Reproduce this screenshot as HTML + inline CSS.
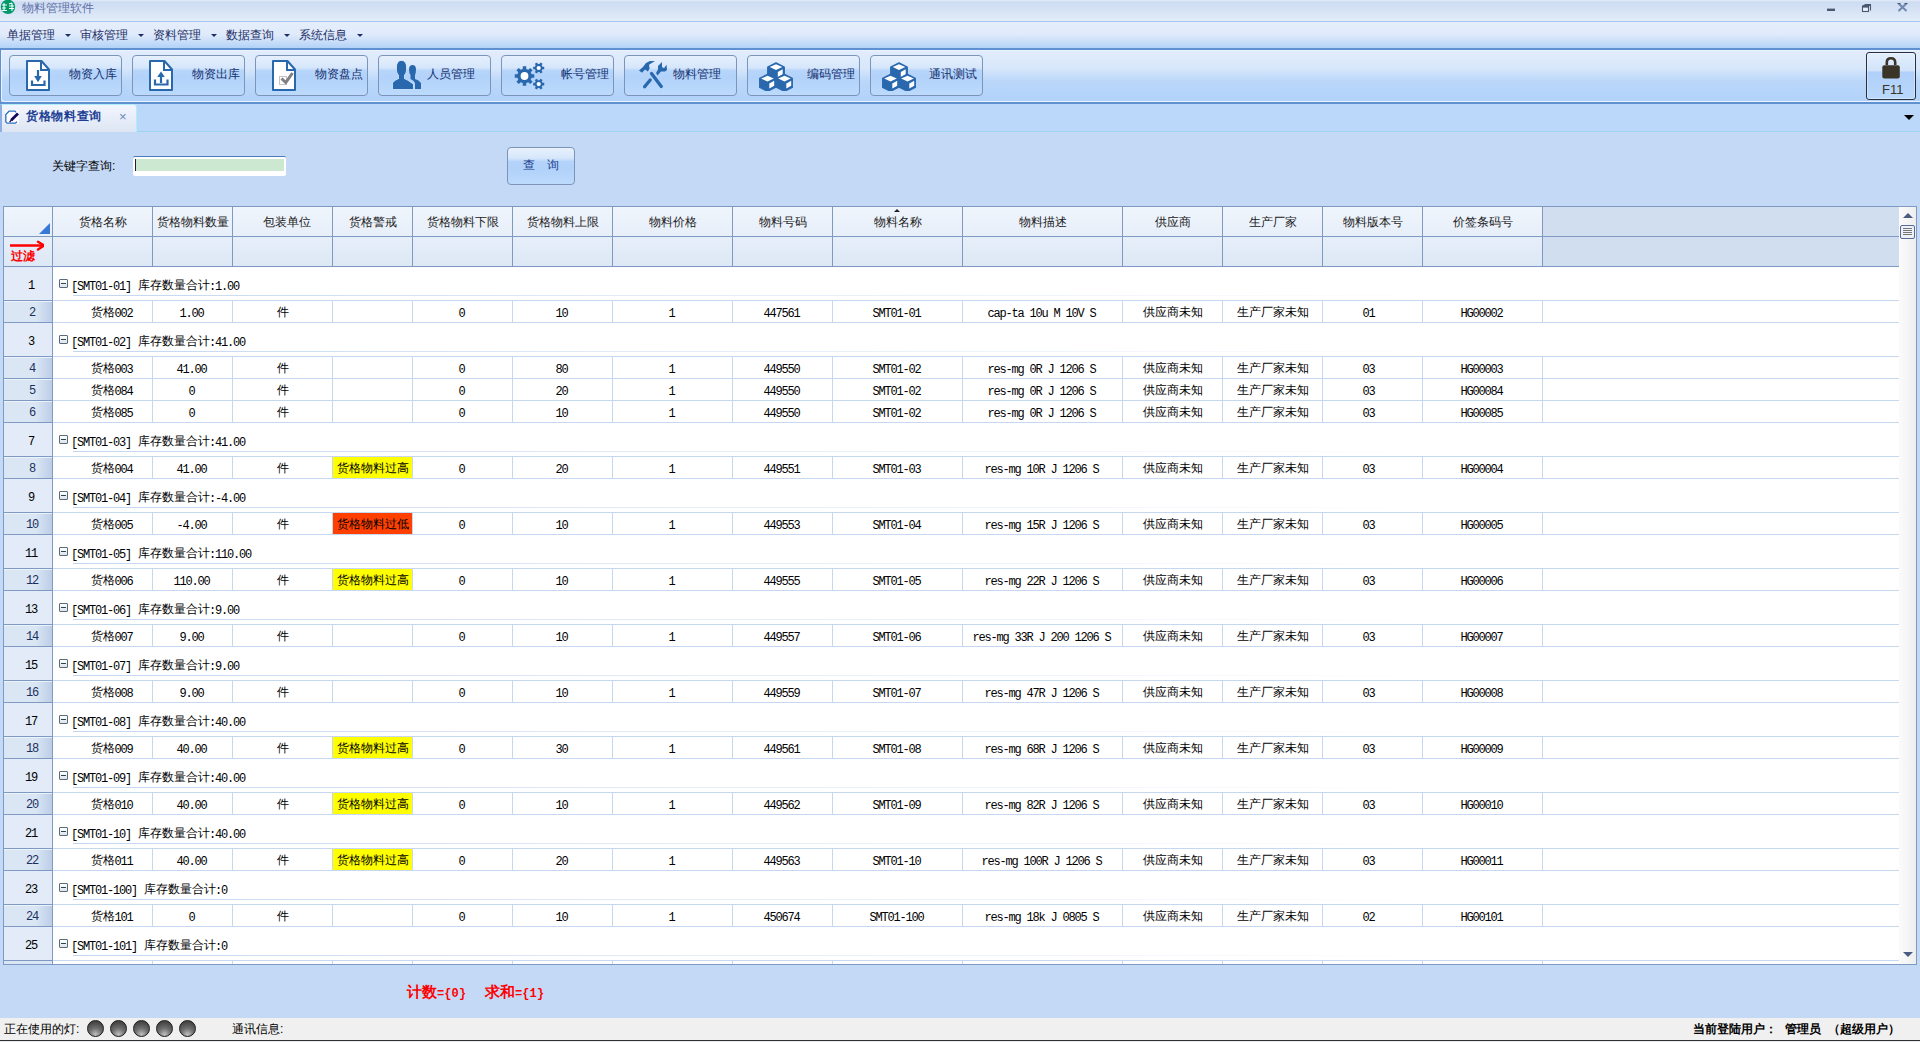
<!DOCTYPE html><html><head><meta charset="utf-8"><style>
*{margin:0;padding:0;box-sizing:border-box}
html,body{width:1920px;height:1042px;overflow:hidden;background:#c4d9f5;font-family:"Liberation Sans",sans-serif;font-size:12px;color:#000}
.a{position:absolute}
.m{font-family:"Liberation Mono",monospace;font-size:12px;letter-spacing:-1.2px;position:relative;left:-1px;top:1px}
.c{font-size:12px}
#title{left:0;top:0;width:1920px;height:22px;background:linear-gradient(#e4edf9 0px,#cedcf2 2px,#d4e1f4 8px,#e2ecf9 21px);border-bottom:1px solid #a6c8f0}
#menu{left:0;top:22px;width:1920px;height:28px;background:linear-gradient(#e5eefb 0%,#dfeafb 50%,#c6ddf9 78%,#b2d2f8 100%);border-bottom:2px solid #5f90d0}
.mi{top:29px;height:12px;line-height:12px;color:#1e2f66}
.arr{width:0;height:0;border-left:3px solid transparent;border-right:3px solid transparent;border-top:3px solid #1e2f66}
#tool{left:0;top:50px;width:1920px;height:54px;background:linear-gradient(#e2edfc 0%,#d8e7fb 35%,#bad7fa 60%,#b2d2fa 100%);border-bottom:2px solid #5f90d0;border-left:1px solid #5f90d0}
#toolhi{left:1px;top:50px;width:1919px;height:52px;border:1px solid #eaf3fd;border-right:none;border-radius:4px 0 0 4px}
.tb{top:55px;width:113px;height:41px;border:1px solid #7b94b8;border-radius:4px;background:linear-gradient(#e6f0fd 0%,#d6e6fb 30%,#b8d6fa 37%,#b2d2fa 55%,#bcdafc 100%)}
.tt{color:#15306e;height:12px;line-height:12px;top:68px}
#tabs{left:0;top:104px;width:1920px;height:28px;background:#bbd8fb;border-bottom:1px solid #9fd4f2}
#tab{left:0;top:104px;width:137px;height:28px;background:linear-gradient(#f2f5fd,#dde6f4);border:1px solid #b0eefc;border-left:2px solid #8eaee0;border-bottom:none;border-radius:0 3px 0 0}
#grid{left:3px;top:206px;width:1914px;height:759px;border:1px solid #7f9ac2;background:#fff;overflow:hidden}
.hd{background:linear-gradient(#f0f5fc,#dde8f6)}
.hl{background:#7f9ac2}
.cl{background:#c5d8f0}
</style></head><body>

<div id="title" class="a"></div>
<svg class="a" style="left:0;top:0" width="16" height="15" viewBox="0 0 16 15"><circle cx="8" cy="6.8" r="7.2" fill="#009a6a"/><path d="M2,5 H7 M4,3 V11 M2,8 H6 M2,10.5 H7 M9,4 L12,3 M9,6 H14 M12,3 V11 M9,8.5 H14" stroke="#fff" stroke-width="1.1" fill="none"/></svg>
<div class="a" style="left:22px;top:2px;height:12px;line-height:12px;color:#6070a8;font-size:12px">物料管理软件</div>
<svg class="a" style="left:1820px;top:0" width="100" height="16" viewBox="0 0 100 16"><rect x="7" y="8.6" width="8" height="2.4" fill="#4a5870"/><path d="M42.5,5.5 H50.5 V10.5 M44.5,4.6 H51" fill="none" stroke="#4a5870" stroke-width="1.1"/><rect x="42.5" y="6.5" width="6" height="5" fill="#e8eefa" stroke="#4a5870" stroke-width="1.1"/><rect x="42.5" y="6.3" width="6" height="1.3" fill="#4a5870"/><path d="M78.5,3.5 L86.5,11 M86.5,3.5 L78.5,11" stroke="#7088b0" stroke-width="2"/><path d="M77.5,3.5 H80.5 M84.5,3.5 H87.5" stroke="#505a68" stroke-width="1.2"/></svg>
<div id="menu" class="a"></div>
<div class="a mi" style="left:7px">单据管理</div>
<div class="a arr" style="left:65px;top:34px"></div>
<div class="a mi" style="left:80px">审核管理</div>
<div class="a arr" style="left:138px;top:34px"></div>
<div class="a mi" style="left:153px">资料管理</div>
<div class="a arr" style="left:211px;top:34px"></div>
<div class="a mi" style="left:226px">数据查询</div>
<div class="a arr" style="left:284px;top:34px"></div>
<div class="a mi" style="left:299px">系统信息</div>
<div class="a arr" style="left:357px;top:34px"></div>
<div id="tool" class="a"></div><div id="toolhi" class="a"></div>
<div class="a tb" style="left:9px"></div>
<div class="a tt" style="left:69px">物资入库</div>
<div class="a tb" style="left:132px"></div>
<div class="a tt" style="left:192px">物资出库</div>
<div class="a tb" style="left:255px"></div>
<div class="a tt" style="left:315px">物资盘点</div>
<div class="a tb" style="left:378px"></div>
<div class="a tt" style="left:427px">人员管理</div>
<div class="a tb" style="left:501px"></div>
<div class="a tt" style="left:561px">帐号管理</div>
<div class="a tb" style="left:624px"></div>
<div class="a tt" style="left:673px">物料管理</div>
<div class="a tb" style="left:747px"></div>
<div class="a tt" style="left:807px">编码管理</div>
<div class="a tb" style="left:870px"></div>
<div class="a tt" style="left:929px">通讯测试</div>
<svg class="a" style="left:26px;top:60px" width="24" height="31" viewBox="0 0 24 31"><path d="M1,1 H15.5 L23,9.5 V30 H1 Z" fill="#fff" stroke="#2a68ae" stroke-width="2" stroke-linejoin="round"/><path d="M15,1 V10 H23" fill="none" stroke="#2a68ae" stroke-width="2"/><path d="M12,10 V19" stroke="#2a68ae" stroke-width="2.2"/><path d="M8.2,16 L12,22.2 L15.8,16 Z" fill="#2a68ae"/><path d="M6,20.5 V25 H18.5 V20.5" fill="none" stroke="#2a68ae" stroke-width="2.2"/></svg>
<svg class="a" style="left:149px;top:60px" width="24" height="31" viewBox="0 0 24 31"><path d="M1,1 H15.5 L23,9.5 V30 H1 Z" fill="#fff" stroke="#2a68ae" stroke-width="2" stroke-linejoin="round"/><path d="M15,1 V10 H23" fill="none" stroke="#2a68ae" stroke-width="2"/><path d="M12,14 V23" stroke="#2a68ae" stroke-width="2.2"/><path d="M8.2,17 L12,11.5 L15.8,17 Z" fill="#2a68ae"/><path d="M6,19.5 V24.5 H18.5 V19.5" fill="none" stroke="#2a68ae" stroke-width="2.2"/></svg>
<svg class="a" style="left:272px;top:60px" width="24" height="31" viewBox="0 0 24 31"><path d="M1,1 H15.5 L23,9.5 V30 H1 Z" fill="#fff" stroke="#2a68ae" stroke-width="2" stroke-linejoin="round"/><path d="M15,1 V10 H23" fill="none" stroke="#2a68ae" stroke-width="2"/><rect x="7.5" y="16.5" width="7" height="8" fill="none" stroke="#c4c4c4" stroke-width="1"/><path d="M9.5,18.5 L13.8,22.5 L20.5,13" fill="none" stroke="#808080" stroke-width="3"/></svg>
<svg class="a" style="left:388px;top:56px" width="38" height="38" viewBox="0 0 38 38"><path d="M27,33 V27 Q26,24.5 22.5,23 V19 Q21,17 21,13.5 Q21,9 24.5,9 Q28,9 28,13.5 Q28,17 27,19 V23 Q31,24 33,27 V33 Z" fill="#2a68ae"/><path d="M5,33 V27 Q7,24.5 11,23 V19 Q9,17 9,12 Q9,5 13.5,5 Q18,5 18,12 Q18,17 16,19 V23 Q21,25 25,28.5 V33 Z" fill="#2a68ae" stroke="#c6ddf9" stroke-width="1.3" paint-order="stroke"/><path d="M5,33 V27 Q7,24.5 11,23 V19 Q9,17 9,12 Q9,5 13.5,5 Q18,5 18,12 Q18,17 16,19 V23 Q21,25 25,28.5 V33 Z" fill="#2a68ae"/></svg>
<svg class="a" style="left:510px;top:58px" width="38" height="36" viewBox="0 0 38 36"><path d="M21.58,16.24 L24.25,16.26 L24.25,19.74 L21.58,19.76 L20.75,21.77 L22.62,23.66 L20.16,26.12 L18.27,24.25 L16.26,25.08 L16.24,27.75 L12.76,27.75 L12.74,25.08 L10.73,24.25 L8.84,26.12 L6.38,23.66 L8.25,21.77 L7.42,19.76 L4.75,19.74 L4.75,16.26 L7.42,16.24 L8.25,14.23 L6.38,12.34 L8.84,9.88 L10.73,11.75 L12.74,10.92 L12.76,8.25 L16.24,8.25 L16.26,10.92 L18.27,11.75 L20.16,9.88 L22.62,12.34 L20.75,14.23 Z" fill="#2a68ae"/><circle cx="14.5" cy="18" r="3.9" fill="#fff"/><path d="M32.49,8.72 L34.24,8.67 L34.24,11.33 L32.49,11.28 L31.70,12.65 L32.62,14.13 L30.32,15.47 L29.49,13.92 L27.91,13.92 L27.08,15.47 L24.78,14.13 L25.70,12.65 L24.91,11.28 L23.16,11.33 L23.16,8.67 L24.91,8.72 L25.70,7.35 L24.78,5.87 L27.08,4.53 L27.91,6.08 L29.49,6.08 L30.32,4.53 L32.62,5.87 L31.70,7.35 Z" fill="#2a68ae"/><circle cx="28.7" cy="10" r="2.1" fill="#fff"/><path d="M32.49,24.82 L34.24,24.77 L34.24,27.43 L32.49,27.38 L31.70,28.75 L32.62,30.23 L30.32,31.57 L29.49,30.02 L27.91,30.02 L27.08,31.57 L24.78,30.23 L25.70,28.75 L24.91,27.38 L23.16,27.43 L23.16,24.77 L24.91,24.82 L25.70,23.45 L24.78,21.97 L27.08,20.63 L27.91,22.18 L29.49,22.18 L30.32,20.63 L32.62,21.97 L31.70,23.45 Z" fill="#2a68ae"/><circle cx="28.7" cy="26.1" r="2.1" fill="#fff"/></svg>
<svg class="a" style="left:634px;top:56px" width="38" height="38" viewBox="0 0 38 38"><path d="M5,14.5 L9,11 L12,7 L16,5 L21,5 L15,8.7 L15.6,12.4 L13.9,15.6 L11,13.6 L8,16.8 Z" fill="#2a68ae"/><path d="M17.5,17.5 L27.3,30.5" stroke="#2a68ae" stroke-width="3.3" stroke-linecap="round"/><path d="M16.2,24 L10.6,30.8" stroke="#2a68ae" stroke-width="3.3" stroke-linecap="round"/><path d="M24,10 L28,6 L28,11 L30,12.2 L32.5,8.7 L33,14 L31,15.6 L27,15.6 L23.5,19.6 L22,17 L24,13.5 Z" fill="#2a68ae"/></svg>
<svg class="a" style="left:759px;top:62px" width="34" height="29" viewBox="0 0 34 29"><path d="M17.0,0.8 L25.3,5.1 L25.3,13.6 L17.0,17.9 L8.7,13.6 L8.7,5.1 Z" fill="#2a68ae" stroke="#2a68ae" stroke-width="1.2" stroke-linejoin="round"/><path d="M17.0,2.2 L23.3,5.1 L17.0,8.0 L10.7,5.1 Z" fill="#fff"/><path d="M18.8,10.0 L23.7,7.3 L23.7,12.2 L18.8,14.9 Z" fill="#fff"/><path d="M8.5,12.3 L16.8,16.6 L16.8,25.1 L8.5,29.4 L0.2,25.1 L0.2,16.6 Z" fill="#2a68ae" stroke="#2a68ae" stroke-width="1.2" stroke-linejoin="round"/><path d="M8.5,13.7 L14.8,16.6 L8.5,19.5 L2.2,16.6 Z" fill="#fff"/><path d="M10.3,21.5 L15.2,18.8 L15.2,23.7 L10.3,26.4 Z" fill="#fff"/><path d="M25.5,12.3 L33.8,16.6 L33.8,25.1 L25.5,29.4 L17.2,25.1 L17.2,16.6 Z" fill="#2a68ae" stroke="#2a68ae" stroke-width="1.2" stroke-linejoin="round"/><path d="M25.5,13.7 L31.8,16.6 L25.5,19.5 L19.2,16.6 Z" fill="#fff"/><path d="M27.3,21.5 L32.2,18.8 L32.2,23.7 L27.3,26.4 Z" fill="#fff"/></svg>
<svg class="a" style="left:882px;top:62px" width="34" height="29" viewBox="0 0 34 29"><path d="M17.0,0.8 L25.3,5.1 L25.3,13.6 L17.0,17.9 L8.7,13.6 L8.7,5.1 Z" fill="#2a68ae" stroke="#2a68ae" stroke-width="1.2" stroke-linejoin="round"/><path d="M17.0,2.2 L23.3,5.1 L17.0,8.0 L10.7,5.1 Z" fill="#fff"/><path d="M18.8,10.0 L23.7,7.3 L23.7,12.2 L18.8,14.9 Z" fill="#fff"/><path d="M8.5,12.3 L16.8,16.6 L16.8,25.1 L8.5,29.4 L0.2,25.1 L0.2,16.6 Z" fill="#2a68ae" stroke="#2a68ae" stroke-width="1.2" stroke-linejoin="round"/><path d="M8.5,13.7 L14.8,16.6 L8.5,19.5 L2.2,16.6 Z" fill="#fff"/><path d="M10.3,21.5 L15.2,18.8 L15.2,23.7 L10.3,26.4 Z" fill="#fff"/><path d="M25.5,12.3 L33.8,16.6 L33.8,25.1 L25.5,29.4 L17.2,25.1 L17.2,16.6 Z" fill="#2a68ae" stroke="#2a68ae" stroke-width="1.2" stroke-linejoin="round"/><path d="M25.5,13.7 L31.8,16.6 L25.5,19.5 L19.2,16.6 Z" fill="#fff"/><path d="M27.3,21.5 L32.2,18.8 L32.2,23.7 L27.3,26.4 Z" fill="#fff"/></svg>
<div class="a" style="left:1866px;top:52px;width:50px;height:48px;border:1px solid #283040;border-radius:3px;background:linear-gradient(#e2eefc 0%,#d2e4fb 38%,#b0d0fa 42%,#bad8fc 100%);box-shadow:inset 0 0 0 1px rgba(255,255,255,0.35)"></div>
<svg class="a" style="left:1880px;top:56px" width="22" height="24" viewBox="0 0 22 24"><path d="M6.8,9 V6.5 Q6.8,2.2 11,2.2 Q15.2,2.2 15.2,6.5 V9" fill="none" stroke="#3a3428" stroke-width="2.6"/><rect x="2.3" y="9.2" width="17.5" height="13.4" rx="2" fill="#3a3428"/></svg>
<div class="a" style="left:1882px;top:83px;font-size:13px;line-height:13px;color:#3a3428">F11</div>
<div id="tabs" class="a"></div>
<div id="tab" class="a"></div>
<svg class="a" style="left:5px;top:110px" width="14" height="14" viewBox="0 0 14 14"><rect width="14" height="14" fill="#fff"/><path d="M11.5,11.5 V12.2 L10.5,13.2 H2 L0.8,12 V4.5 L4,1.2 H10 L11,2.2" stroke="#2a70c0" stroke-width="1.3" fill="none"/><path d="M6.2,10.2 L13,3.4" stroke="#100a60" stroke-width="2.8"/><path d="M4.6,12 L6.5,10" stroke="#100a60" stroke-width="1.3"/></svg>
<div class="a" style="left:26px;top:110px;font-weight:bold;color:#1c3f94;letter-spacing:0.7px;line-height:12px">货格物料查询</div>
<div class="a" style="left:119px;top:110px;color:#6a88b8;font-size:13px;line-height:13px">×</div>
<div class="a" style="left:1904px;top:115px;width:0;height:0;border-left:5px solid transparent;border-right:5px solid transparent;border-top:5px solid #000"></div>
<div class="a" style="left:52px;top:160px;line-height:12px">关键字查询:</div>
<div class="a" style="left:133px;top:156px;width:153px;height:20px;background:#fff;border-top:1px solid #4a7ab8;border-radius:2px"></div>
<div class="a" style="left:135px;top:159px;width:149px;height:12px;background:#cce8d0"></div>
<div class="a" style="left:135px;top:159px;width:1px;height:12px;background:#301830"></div>
<div class="a" style="left:507px;top:147px;width:68px;height:38px;border:1px solid #7b94b8;border-radius:4px;background:linear-gradient(#e8f1fd 0%,#d6e7fb 28%,#b4d3fa 38%,#b2d2fa 60%,#bddafc 100%)"></div>
<div class="a" style="left:523px;top:159px;color:#1a3f8e;line-height:12px">查</div>
<div class="a" style="left:547px;top:159px;color:#1a3f8e;line-height:12px">询</div>
<div id="grid" class="a">
<div class="a hd" style="left:0px;top:0px;width:1895px;height:59px;"></div>
<div class="a " style="left:1539px;top:0px;width:356px;height:59px;background:#d0deef"></div>
<div class="a hl" style="left:0px;top:29px;width:1895px;height:1px;"></div>
<div class="a hl" style="left:0px;top:59px;width:1895px;height:1px;"></div>
<div class="a hl" style="left:48px;top:0px;width:1px;height:59px;"></div>
<div class="a hl" style="left:148px;top:0px;width:1px;height:59px;"></div>
<div class="a hl" style="left:228px;top:0px;width:1px;height:59px;"></div>
<div class="a hl" style="left:328px;top:0px;width:1px;height:59px;"></div>
<div class="a hl" style="left:408px;top:0px;width:1px;height:59px;"></div>
<div class="a hl" style="left:508px;top:0px;width:1px;height:59px;"></div>
<div class="a hl" style="left:608px;top:0px;width:1px;height:59px;"></div>
<div class="a hl" style="left:728px;top:0px;width:1px;height:59px;"></div>
<div class="a hl" style="left:828px;top:0px;width:1px;height:59px;"></div>
<div class="a hl" style="left:958px;top:0px;width:1px;height:59px;"></div>
<div class="a hl" style="left:1118px;top:0px;width:1px;height:59px;"></div>
<div class="a hl" style="left:1218px;top:0px;width:1px;height:59px;"></div>
<div class="a hl" style="left:1318px;top:0px;width:1px;height:59px;"></div>
<div class="a hl" style="left:1418px;top:0px;width:1px;height:59px;"></div>
<div class="a hl" style="left:1538px;top:0px;width:1px;height:59px;"></div>
<div class="a" style="left:49px;top:9px;width:99px;text-align:center;line-height:12px;color:#1a1a1a">货格名称</div>
<div class="a" style="left:149px;top:9px;width:79px;text-align:center;line-height:12px;color:#1a1a1a">货格物料数量</div>
<div class="a" style="left:233px;top:9px;width:99px;text-align:center;line-height:12px;color:#1a1a1a">包装单位</div>
<div class="a" style="left:329px;top:9px;width:79px;text-align:center;line-height:12px;color:#1a1a1a">货格警戒</div>
<div class="a" style="left:409px;top:9px;width:99px;text-align:center;line-height:12px;color:#1a1a1a">货格物料下限</div>
<div class="a" style="left:509px;top:9px;width:99px;text-align:center;line-height:12px;color:#1a1a1a">货格物料上限</div>
<div class="a" style="left:609px;top:9px;width:119px;text-align:center;line-height:12px;color:#1a1a1a">物料价格</div>
<div class="a" style="left:729px;top:9px;width:99px;text-align:center;line-height:12px;color:#1a1a1a">物料号码</div>
<div class="a" style="left:829px;top:9px;width:129px;text-align:center;line-height:12px;color:#1a1a1a">物料名称</div>
<div class="a" style="left:959px;top:9px;width:159px;text-align:center;line-height:12px;color:#1a1a1a">物料描述</div>
<div class="a" style="left:1119px;top:9px;width:99px;text-align:center;line-height:12px;color:#1a1a1a">供应商</div>
<div class="a" style="left:1219px;top:9px;width:99px;text-align:center;line-height:12px;color:#1a1a1a">生产厂家</div>
<div class="a" style="left:1319px;top:9px;width:99px;text-align:center;line-height:12px;color:#1a1a1a">物料版本号</div>
<div class="a" style="left:1419px;top:9px;width:119px;text-align:center;line-height:12px;color:#1a1a1a">价签条码号</div>
<div class="a" style="left:890px;top:2px;width:0;height:0;border-left:3px solid transparent;border-right:3px solid transparent;border-bottom:3px solid #202020"></div>
<div class="a" style="left:35px;top:16px;width:0;height:0;border-left:11px solid transparent;border-bottom:11px solid #3a78d8"></div>
<div class="a" style="left:7px;top:43px;line-height:12px;white-space:nowrap;color:#f00;font-weight:bold;font-size:12px">过滤</div>
<svg class="a" style="left:0px;top:33px" width="40" height="12" viewBox="0 0 40 12"><path d="M6,5.5 H40.3" stroke="#f00" stroke-width="2.4"/><path d="M34,1.8 L40.3,5.5 L34,9.5" fill="none" stroke="#f00" stroke-width="2.4" stroke-linejoin="round" stroke-linecap="round"/></svg>
<div class="a " style="left:0px;top:60px;width:48px;height:33px;background:#e2ebf7"></div>
<div class="a hl" style="left:0px;top:93px;width:48px;height:1px;"></div>
<div class="a hl" style="left:48px;top:60px;width:1px;height:34px;"></div>
<div class="a" style="left:4px;top:72px;line-height:12px;white-space:nowrap;"><div class="m" style="width:48px;text-align:center">1</div></div>
<div class="a " style="left:55px;top:72px;width:9px;height:9px;border:1px solid #5a6a7a;background:linear-gradient(#fff,#dde4ea);border-radius:1px"></div>
<div class="a " style="left:57px;top:76px;width:5px;height:1px;background:#2a4a4a"></div>
<div class="a" style="left:68px;top:72px;line-height:12px;white-space:nowrap;"><span class="m">[SMT01-01]&nbsp;</span><span class="c">库存数量合计</span><span class="m">:1.00</span></div>
<div class="a " style="left:69px;top:88px;width:1380px;height:1px;background:linear-gradient(90deg,#c2d6f2,rgba(194,214,242,0.55) 35%,rgba(194,214,242,0))"></div>
<div class="a cl" style="left:49px;top:93px;width:1846px;height:1px;"></div>
<div class="a " style="left:0px;top:94px;width:48px;height:21px;background:linear-gradient(90deg,#dae6f4 0%,#dae6f4 66%,#bccde6 100%);border-top:1px solid #edf3fb"></div>
<div class="a hl" style="left:0px;top:115px;width:48px;height:1px;"></div>
<div class="a hl" style="left:48px;top:94px;width:1px;height:22px;"></div>
<div class="a" style="left:5px;top:99px;line-height:12px;white-space:nowrap;"><div class="m" style="width:48px;text-align:center;color:#1a3060">2</div></div>
<div class="a cl" style="left:148px;top:94px;width:1px;height:21px;"></div>
<div class="a" style="left:69px;top:99px;width:79px;text-align:center;line-height:12px;white-space:nowrap"><span class="c">货格</span><span class="m">002</span></div>
<div class="a cl" style="left:228px;top:94px;width:1px;height:21px;"></div>
<div class="a" style="left:149px;top:99px;width:79px;text-align:center;line-height:12px;white-space:nowrap"><span class="m">1.00</span></div>
<div class="a cl" style="left:328px;top:94px;width:1px;height:21px;"></div>
<div class="a" style="left:229px;top:99px;width:99px;text-align:center;line-height:12px;white-space:nowrap"><span class="c">件</span></div>
<div class="a cl" style="left:408px;top:94px;width:1px;height:21px;"></div>
<div class="a" style="left:329px;top:99px;width:79px;text-align:center;line-height:12px;white-space:nowrap"></div>
<div class="a cl" style="left:508px;top:94px;width:1px;height:21px;"></div>
<div class="a" style="left:409px;top:99px;width:99px;text-align:center;line-height:12px;white-space:nowrap"><span class="m">0</span></div>
<div class="a cl" style="left:608px;top:94px;width:1px;height:21px;"></div>
<div class="a" style="left:509px;top:99px;width:99px;text-align:center;line-height:12px;white-space:nowrap"><span class="m">10</span></div>
<div class="a cl" style="left:728px;top:94px;width:1px;height:21px;"></div>
<div class="a" style="left:609px;top:99px;width:119px;text-align:center;line-height:12px;white-space:nowrap"><span class="m">1</span></div>
<div class="a cl" style="left:828px;top:94px;width:1px;height:21px;"></div>
<div class="a" style="left:729px;top:99px;width:99px;text-align:center;line-height:12px;white-space:nowrap"><span class="m">447561</span></div>
<div class="a cl" style="left:958px;top:94px;width:1px;height:21px;"></div>
<div class="a" style="left:829px;top:99px;width:129px;text-align:center;line-height:12px;white-space:nowrap"><span class="m">SMT01-01</span></div>
<div class="a cl" style="left:1118px;top:94px;width:1px;height:21px;"></div>
<div class="a" style="left:959px;top:99px;width:159px;text-align:center;line-height:12px;white-space:nowrap"><span class="m">cap-ta&nbsp;10u&nbsp;M&nbsp;10V&nbsp;S</span></div>
<div class="a cl" style="left:1218px;top:94px;width:1px;height:21px;"></div>
<div class="a" style="left:1119px;top:99px;width:99px;text-align:center;line-height:12px;white-space:nowrap"><span class="c">供应商未知</span></div>
<div class="a cl" style="left:1318px;top:94px;width:1px;height:21px;"></div>
<div class="a" style="left:1219px;top:99px;width:99px;text-align:center;line-height:12px;white-space:nowrap"><span class="c">生产厂家未知</span></div>
<div class="a cl" style="left:1418px;top:94px;width:1px;height:21px;"></div>
<div class="a" style="left:1316px;top:99px;width:99px;text-align:center;line-height:12px;white-space:nowrap"><span class="m">01</span></div>
<div class="a cl" style="left:1538px;top:94px;width:1px;height:21px;"></div>
<div class="a" style="left:1419px;top:99px;width:119px;text-align:center;line-height:12px;white-space:nowrap"><span class="m">HG00002</span></div>
<div class="a cl" style="left:49px;top:115px;width:1846px;height:1px;"></div>
<div class="a " style="left:0px;top:116px;width:48px;height:33px;background:#e2ebf7"></div>
<div class="a hl" style="left:0px;top:149px;width:48px;height:1px;"></div>
<div class="a hl" style="left:48px;top:116px;width:1px;height:34px;"></div>
<div class="a" style="left:4px;top:128px;line-height:12px;white-space:nowrap;"><div class="m" style="width:48px;text-align:center">3</div></div>
<div class="a " style="left:55px;top:128px;width:9px;height:9px;border:1px solid #5a6a7a;background:linear-gradient(#fff,#dde4ea);border-radius:1px"></div>
<div class="a " style="left:57px;top:132px;width:5px;height:1px;background:#2a4a4a"></div>
<div class="a" style="left:68px;top:128px;line-height:12px;white-space:nowrap;"><span class="m">[SMT01-02]&nbsp;</span><span class="c">库存数量合计</span><span class="m">:41.00</span></div>
<div class="a " style="left:69px;top:144px;width:1380px;height:1px;background:linear-gradient(90deg,#c2d6f2,rgba(194,214,242,0.55) 35%,rgba(194,214,242,0))"></div>
<div class="a cl" style="left:49px;top:149px;width:1846px;height:1px;"></div>
<div class="a " style="left:0px;top:150px;width:48px;height:21px;background:linear-gradient(90deg,#dae6f4 0%,#dae6f4 66%,#bccde6 100%);border-top:1px solid #edf3fb"></div>
<div class="a hl" style="left:0px;top:171px;width:48px;height:1px;"></div>
<div class="a hl" style="left:48px;top:150px;width:1px;height:22px;"></div>
<div class="a" style="left:5px;top:155px;line-height:12px;white-space:nowrap;"><div class="m" style="width:48px;text-align:center;color:#1a3060">4</div></div>
<div class="a cl" style="left:148px;top:150px;width:1px;height:21px;"></div>
<div class="a" style="left:69px;top:155px;width:79px;text-align:center;line-height:12px;white-space:nowrap"><span class="c">货格</span><span class="m">003</span></div>
<div class="a cl" style="left:228px;top:150px;width:1px;height:21px;"></div>
<div class="a" style="left:149px;top:155px;width:79px;text-align:center;line-height:12px;white-space:nowrap"><span class="m">41.00</span></div>
<div class="a cl" style="left:328px;top:150px;width:1px;height:21px;"></div>
<div class="a" style="left:229px;top:155px;width:99px;text-align:center;line-height:12px;white-space:nowrap"><span class="c">件</span></div>
<div class="a cl" style="left:408px;top:150px;width:1px;height:21px;"></div>
<div class="a" style="left:329px;top:155px;width:79px;text-align:center;line-height:12px;white-space:nowrap"></div>
<div class="a cl" style="left:508px;top:150px;width:1px;height:21px;"></div>
<div class="a" style="left:409px;top:155px;width:99px;text-align:center;line-height:12px;white-space:nowrap"><span class="m">0</span></div>
<div class="a cl" style="left:608px;top:150px;width:1px;height:21px;"></div>
<div class="a" style="left:509px;top:155px;width:99px;text-align:center;line-height:12px;white-space:nowrap"><span class="m">80</span></div>
<div class="a cl" style="left:728px;top:150px;width:1px;height:21px;"></div>
<div class="a" style="left:609px;top:155px;width:119px;text-align:center;line-height:12px;white-space:nowrap"><span class="m">1</span></div>
<div class="a cl" style="left:828px;top:150px;width:1px;height:21px;"></div>
<div class="a" style="left:729px;top:155px;width:99px;text-align:center;line-height:12px;white-space:nowrap"><span class="m">449550</span></div>
<div class="a cl" style="left:958px;top:150px;width:1px;height:21px;"></div>
<div class="a" style="left:829px;top:155px;width:129px;text-align:center;line-height:12px;white-space:nowrap"><span class="m">SMT01-02</span></div>
<div class="a cl" style="left:1118px;top:150px;width:1px;height:21px;"></div>
<div class="a" style="left:959px;top:155px;width:159px;text-align:center;line-height:12px;white-space:nowrap"><span class="m">res-mg&nbsp;0R&nbsp;J&nbsp;1206&nbsp;S</span></div>
<div class="a cl" style="left:1218px;top:150px;width:1px;height:21px;"></div>
<div class="a" style="left:1119px;top:155px;width:99px;text-align:center;line-height:12px;white-space:nowrap"><span class="c">供应商未知</span></div>
<div class="a cl" style="left:1318px;top:150px;width:1px;height:21px;"></div>
<div class="a" style="left:1219px;top:155px;width:99px;text-align:center;line-height:12px;white-space:nowrap"><span class="c">生产厂家未知</span></div>
<div class="a cl" style="left:1418px;top:150px;width:1px;height:21px;"></div>
<div class="a" style="left:1316px;top:155px;width:99px;text-align:center;line-height:12px;white-space:nowrap"><span class="m">03</span></div>
<div class="a cl" style="left:1538px;top:150px;width:1px;height:21px;"></div>
<div class="a" style="left:1419px;top:155px;width:119px;text-align:center;line-height:12px;white-space:nowrap"><span class="m">HG00003</span></div>
<div class="a cl" style="left:49px;top:171px;width:1846px;height:1px;"></div>
<div class="a " style="left:0px;top:172px;width:48px;height:21px;background:linear-gradient(90deg,#dae6f4 0%,#dae6f4 66%,#bccde6 100%);border-top:1px solid #edf3fb"></div>
<div class="a hl" style="left:0px;top:193px;width:48px;height:1px;"></div>
<div class="a hl" style="left:48px;top:172px;width:1px;height:22px;"></div>
<div class="a" style="left:5px;top:177px;line-height:12px;white-space:nowrap;"><div class="m" style="width:48px;text-align:center;color:#1a3060">5</div></div>
<div class="a cl" style="left:148px;top:172px;width:1px;height:21px;"></div>
<div class="a" style="left:69px;top:177px;width:79px;text-align:center;line-height:12px;white-space:nowrap"><span class="c">货格</span><span class="m">084</span></div>
<div class="a cl" style="left:228px;top:172px;width:1px;height:21px;"></div>
<div class="a" style="left:149px;top:177px;width:79px;text-align:center;line-height:12px;white-space:nowrap"><span class="m">0</span></div>
<div class="a cl" style="left:328px;top:172px;width:1px;height:21px;"></div>
<div class="a" style="left:229px;top:177px;width:99px;text-align:center;line-height:12px;white-space:nowrap"><span class="c">件</span></div>
<div class="a cl" style="left:408px;top:172px;width:1px;height:21px;"></div>
<div class="a" style="left:329px;top:177px;width:79px;text-align:center;line-height:12px;white-space:nowrap"></div>
<div class="a cl" style="left:508px;top:172px;width:1px;height:21px;"></div>
<div class="a" style="left:409px;top:177px;width:99px;text-align:center;line-height:12px;white-space:nowrap"><span class="m">0</span></div>
<div class="a cl" style="left:608px;top:172px;width:1px;height:21px;"></div>
<div class="a" style="left:509px;top:177px;width:99px;text-align:center;line-height:12px;white-space:nowrap"><span class="m">20</span></div>
<div class="a cl" style="left:728px;top:172px;width:1px;height:21px;"></div>
<div class="a" style="left:609px;top:177px;width:119px;text-align:center;line-height:12px;white-space:nowrap"><span class="m">1</span></div>
<div class="a cl" style="left:828px;top:172px;width:1px;height:21px;"></div>
<div class="a" style="left:729px;top:177px;width:99px;text-align:center;line-height:12px;white-space:nowrap"><span class="m">449550</span></div>
<div class="a cl" style="left:958px;top:172px;width:1px;height:21px;"></div>
<div class="a" style="left:829px;top:177px;width:129px;text-align:center;line-height:12px;white-space:nowrap"><span class="m">SMT01-02</span></div>
<div class="a cl" style="left:1118px;top:172px;width:1px;height:21px;"></div>
<div class="a" style="left:959px;top:177px;width:159px;text-align:center;line-height:12px;white-space:nowrap"><span class="m">res-mg&nbsp;0R&nbsp;J&nbsp;1206&nbsp;S</span></div>
<div class="a cl" style="left:1218px;top:172px;width:1px;height:21px;"></div>
<div class="a" style="left:1119px;top:177px;width:99px;text-align:center;line-height:12px;white-space:nowrap"><span class="c">供应商未知</span></div>
<div class="a cl" style="left:1318px;top:172px;width:1px;height:21px;"></div>
<div class="a" style="left:1219px;top:177px;width:99px;text-align:center;line-height:12px;white-space:nowrap"><span class="c">生产厂家未知</span></div>
<div class="a cl" style="left:1418px;top:172px;width:1px;height:21px;"></div>
<div class="a" style="left:1316px;top:177px;width:99px;text-align:center;line-height:12px;white-space:nowrap"><span class="m">03</span></div>
<div class="a cl" style="left:1538px;top:172px;width:1px;height:21px;"></div>
<div class="a" style="left:1419px;top:177px;width:119px;text-align:center;line-height:12px;white-space:nowrap"><span class="m">HG00084</span></div>
<div class="a cl" style="left:49px;top:193px;width:1846px;height:1px;"></div>
<div class="a " style="left:0px;top:194px;width:48px;height:21px;background:linear-gradient(90deg,#dae6f4 0%,#dae6f4 66%,#bccde6 100%);border-top:1px solid #edf3fb"></div>
<div class="a hl" style="left:0px;top:215px;width:48px;height:1px;"></div>
<div class="a hl" style="left:48px;top:194px;width:1px;height:22px;"></div>
<div class="a" style="left:5px;top:199px;line-height:12px;white-space:nowrap;"><div class="m" style="width:48px;text-align:center;color:#1a3060">6</div></div>
<div class="a cl" style="left:148px;top:194px;width:1px;height:21px;"></div>
<div class="a" style="left:69px;top:199px;width:79px;text-align:center;line-height:12px;white-space:nowrap"><span class="c">货格</span><span class="m">085</span></div>
<div class="a cl" style="left:228px;top:194px;width:1px;height:21px;"></div>
<div class="a" style="left:149px;top:199px;width:79px;text-align:center;line-height:12px;white-space:nowrap"><span class="m">0</span></div>
<div class="a cl" style="left:328px;top:194px;width:1px;height:21px;"></div>
<div class="a" style="left:229px;top:199px;width:99px;text-align:center;line-height:12px;white-space:nowrap"><span class="c">件</span></div>
<div class="a cl" style="left:408px;top:194px;width:1px;height:21px;"></div>
<div class="a" style="left:329px;top:199px;width:79px;text-align:center;line-height:12px;white-space:nowrap"></div>
<div class="a cl" style="left:508px;top:194px;width:1px;height:21px;"></div>
<div class="a" style="left:409px;top:199px;width:99px;text-align:center;line-height:12px;white-space:nowrap"><span class="m">0</span></div>
<div class="a cl" style="left:608px;top:194px;width:1px;height:21px;"></div>
<div class="a" style="left:509px;top:199px;width:99px;text-align:center;line-height:12px;white-space:nowrap"><span class="m">10</span></div>
<div class="a cl" style="left:728px;top:194px;width:1px;height:21px;"></div>
<div class="a" style="left:609px;top:199px;width:119px;text-align:center;line-height:12px;white-space:nowrap"><span class="m">1</span></div>
<div class="a cl" style="left:828px;top:194px;width:1px;height:21px;"></div>
<div class="a" style="left:729px;top:199px;width:99px;text-align:center;line-height:12px;white-space:nowrap"><span class="m">449550</span></div>
<div class="a cl" style="left:958px;top:194px;width:1px;height:21px;"></div>
<div class="a" style="left:829px;top:199px;width:129px;text-align:center;line-height:12px;white-space:nowrap"><span class="m">SMT01-02</span></div>
<div class="a cl" style="left:1118px;top:194px;width:1px;height:21px;"></div>
<div class="a" style="left:959px;top:199px;width:159px;text-align:center;line-height:12px;white-space:nowrap"><span class="m">res-mg&nbsp;0R&nbsp;J&nbsp;1206&nbsp;S</span></div>
<div class="a cl" style="left:1218px;top:194px;width:1px;height:21px;"></div>
<div class="a" style="left:1119px;top:199px;width:99px;text-align:center;line-height:12px;white-space:nowrap"><span class="c">供应商未知</span></div>
<div class="a cl" style="left:1318px;top:194px;width:1px;height:21px;"></div>
<div class="a" style="left:1219px;top:199px;width:99px;text-align:center;line-height:12px;white-space:nowrap"><span class="c">生产厂家未知</span></div>
<div class="a cl" style="left:1418px;top:194px;width:1px;height:21px;"></div>
<div class="a" style="left:1316px;top:199px;width:99px;text-align:center;line-height:12px;white-space:nowrap"><span class="m">03</span></div>
<div class="a cl" style="left:1538px;top:194px;width:1px;height:21px;"></div>
<div class="a" style="left:1419px;top:199px;width:119px;text-align:center;line-height:12px;white-space:nowrap"><span class="m">HG00085</span></div>
<div class="a cl" style="left:49px;top:215px;width:1846px;height:1px;"></div>
<div class="a " style="left:0px;top:216px;width:48px;height:33px;background:#e2ebf7"></div>
<div class="a hl" style="left:0px;top:249px;width:48px;height:1px;"></div>
<div class="a hl" style="left:48px;top:216px;width:1px;height:34px;"></div>
<div class="a" style="left:4px;top:228px;line-height:12px;white-space:nowrap;"><div class="m" style="width:48px;text-align:center">7</div></div>
<div class="a " style="left:55px;top:228px;width:9px;height:9px;border:1px solid #5a6a7a;background:linear-gradient(#fff,#dde4ea);border-radius:1px"></div>
<div class="a " style="left:57px;top:232px;width:5px;height:1px;background:#2a4a4a"></div>
<div class="a" style="left:68px;top:228px;line-height:12px;white-space:nowrap;"><span class="m">[SMT01-03]&nbsp;</span><span class="c">库存数量合计</span><span class="m">:41.00</span></div>
<div class="a " style="left:69px;top:244px;width:1380px;height:1px;background:linear-gradient(90deg,#c2d6f2,rgba(194,214,242,0.55) 35%,rgba(194,214,242,0))"></div>
<div class="a cl" style="left:49px;top:249px;width:1846px;height:1px;"></div>
<div class="a " style="left:0px;top:250px;width:48px;height:21px;background:linear-gradient(90deg,#dae6f4 0%,#dae6f4 66%,#bccde6 100%);border-top:1px solid #edf3fb"></div>
<div class="a hl" style="left:0px;top:271px;width:48px;height:1px;"></div>
<div class="a hl" style="left:48px;top:250px;width:1px;height:22px;"></div>
<div class="a" style="left:5px;top:255px;line-height:12px;white-space:nowrap;"><div class="m" style="width:48px;text-align:center;color:#1a3060">8</div></div>
<div class="a cl" style="left:148px;top:250px;width:1px;height:21px;"></div>
<div class="a" style="left:69px;top:255px;width:79px;text-align:center;line-height:12px;white-space:nowrap"><span class="c">货格</span><span class="m">004</span></div>
<div class="a cl" style="left:228px;top:250px;width:1px;height:21px;"></div>
<div class="a" style="left:149px;top:255px;width:79px;text-align:center;line-height:12px;white-space:nowrap"><span class="m">41.00</span></div>
<div class="a cl" style="left:328px;top:250px;width:1px;height:21px;"></div>
<div class="a" style="left:229px;top:255px;width:99px;text-align:center;line-height:12px;white-space:nowrap"><span class="c">件</span></div>
<div class="a cl" style="left:408px;top:250px;width:1px;height:21px;"></div>
<div class="a " style="left:329px;top:250px;width:79px;height:21px;background:#ffff00"></div>
<div class="a" style="left:329px;top:255px;width:79px;text-align:center;line-height:12px;white-space:nowrap"><span class="c">货格物料过高</span></div>
<div class="a cl" style="left:508px;top:250px;width:1px;height:21px;"></div>
<div class="a" style="left:409px;top:255px;width:99px;text-align:center;line-height:12px;white-space:nowrap"><span class="m">0</span></div>
<div class="a cl" style="left:608px;top:250px;width:1px;height:21px;"></div>
<div class="a" style="left:509px;top:255px;width:99px;text-align:center;line-height:12px;white-space:nowrap"><span class="m">20</span></div>
<div class="a cl" style="left:728px;top:250px;width:1px;height:21px;"></div>
<div class="a" style="left:609px;top:255px;width:119px;text-align:center;line-height:12px;white-space:nowrap"><span class="m">1</span></div>
<div class="a cl" style="left:828px;top:250px;width:1px;height:21px;"></div>
<div class="a" style="left:729px;top:255px;width:99px;text-align:center;line-height:12px;white-space:nowrap"><span class="m">449551</span></div>
<div class="a cl" style="left:958px;top:250px;width:1px;height:21px;"></div>
<div class="a" style="left:829px;top:255px;width:129px;text-align:center;line-height:12px;white-space:nowrap"><span class="m">SMT01-03</span></div>
<div class="a cl" style="left:1118px;top:250px;width:1px;height:21px;"></div>
<div class="a" style="left:959px;top:255px;width:159px;text-align:center;line-height:12px;white-space:nowrap"><span class="m">res-mg&nbsp;10R&nbsp;J&nbsp;1206&nbsp;S</span></div>
<div class="a cl" style="left:1218px;top:250px;width:1px;height:21px;"></div>
<div class="a" style="left:1119px;top:255px;width:99px;text-align:center;line-height:12px;white-space:nowrap"><span class="c">供应商未知</span></div>
<div class="a cl" style="left:1318px;top:250px;width:1px;height:21px;"></div>
<div class="a" style="left:1219px;top:255px;width:99px;text-align:center;line-height:12px;white-space:nowrap"><span class="c">生产厂家未知</span></div>
<div class="a cl" style="left:1418px;top:250px;width:1px;height:21px;"></div>
<div class="a" style="left:1316px;top:255px;width:99px;text-align:center;line-height:12px;white-space:nowrap"><span class="m">03</span></div>
<div class="a cl" style="left:1538px;top:250px;width:1px;height:21px;"></div>
<div class="a" style="left:1419px;top:255px;width:119px;text-align:center;line-height:12px;white-space:nowrap"><span class="m">HG00004</span></div>
<div class="a cl" style="left:49px;top:271px;width:1846px;height:1px;"></div>
<div class="a " style="left:0px;top:272px;width:48px;height:33px;background:#e2ebf7"></div>
<div class="a hl" style="left:0px;top:305px;width:48px;height:1px;"></div>
<div class="a hl" style="left:48px;top:272px;width:1px;height:34px;"></div>
<div class="a" style="left:4px;top:284px;line-height:12px;white-space:nowrap;"><div class="m" style="width:48px;text-align:center">9</div></div>
<div class="a " style="left:55px;top:284px;width:9px;height:9px;border:1px solid #5a6a7a;background:linear-gradient(#fff,#dde4ea);border-radius:1px"></div>
<div class="a " style="left:57px;top:288px;width:5px;height:1px;background:#2a4a4a"></div>
<div class="a" style="left:68px;top:284px;line-height:12px;white-space:nowrap;"><span class="m">[SMT01-04]&nbsp;</span><span class="c">库存数量合计</span><span class="m">:-4.00</span></div>
<div class="a " style="left:69px;top:300px;width:1380px;height:1px;background:linear-gradient(90deg,#c2d6f2,rgba(194,214,242,0.55) 35%,rgba(194,214,242,0))"></div>
<div class="a cl" style="left:49px;top:305px;width:1846px;height:1px;"></div>
<div class="a " style="left:0px;top:306px;width:48px;height:21px;background:linear-gradient(90deg,#dae6f4 0%,#dae6f4 66%,#bccde6 100%);border-top:1px solid #edf3fb"></div>
<div class="a hl" style="left:0px;top:327px;width:48px;height:1px;"></div>
<div class="a hl" style="left:48px;top:306px;width:1px;height:22px;"></div>
<div class="a" style="left:5px;top:311px;line-height:12px;white-space:nowrap;"><div class="m" style="width:48px;text-align:center;color:#1a3060">10</div></div>
<div class="a cl" style="left:148px;top:306px;width:1px;height:21px;"></div>
<div class="a" style="left:69px;top:311px;width:79px;text-align:center;line-height:12px;white-space:nowrap"><span class="c">货格</span><span class="m">005</span></div>
<div class="a cl" style="left:228px;top:306px;width:1px;height:21px;"></div>
<div class="a" style="left:149px;top:311px;width:79px;text-align:center;line-height:12px;white-space:nowrap"><span class="m">-4.00</span></div>
<div class="a cl" style="left:328px;top:306px;width:1px;height:21px;"></div>
<div class="a" style="left:229px;top:311px;width:99px;text-align:center;line-height:12px;white-space:nowrap"><span class="c">件</span></div>
<div class="a cl" style="left:408px;top:306px;width:1px;height:21px;"></div>
<div class="a " style="left:329px;top:306px;width:79px;height:21px;background:#ff4000"></div>
<div class="a" style="left:329px;top:311px;width:79px;text-align:center;line-height:12px;white-space:nowrap"><span class="c">货格物料过低</span></div>
<div class="a cl" style="left:508px;top:306px;width:1px;height:21px;"></div>
<div class="a" style="left:409px;top:311px;width:99px;text-align:center;line-height:12px;white-space:nowrap"><span class="m">0</span></div>
<div class="a cl" style="left:608px;top:306px;width:1px;height:21px;"></div>
<div class="a" style="left:509px;top:311px;width:99px;text-align:center;line-height:12px;white-space:nowrap"><span class="m">10</span></div>
<div class="a cl" style="left:728px;top:306px;width:1px;height:21px;"></div>
<div class="a" style="left:609px;top:311px;width:119px;text-align:center;line-height:12px;white-space:nowrap"><span class="m">1</span></div>
<div class="a cl" style="left:828px;top:306px;width:1px;height:21px;"></div>
<div class="a" style="left:729px;top:311px;width:99px;text-align:center;line-height:12px;white-space:nowrap"><span class="m">449553</span></div>
<div class="a cl" style="left:958px;top:306px;width:1px;height:21px;"></div>
<div class="a" style="left:829px;top:311px;width:129px;text-align:center;line-height:12px;white-space:nowrap"><span class="m">SMT01-04</span></div>
<div class="a cl" style="left:1118px;top:306px;width:1px;height:21px;"></div>
<div class="a" style="left:959px;top:311px;width:159px;text-align:center;line-height:12px;white-space:nowrap"><span class="m">res-mg&nbsp;15R&nbsp;J&nbsp;1206&nbsp;S</span></div>
<div class="a cl" style="left:1218px;top:306px;width:1px;height:21px;"></div>
<div class="a" style="left:1119px;top:311px;width:99px;text-align:center;line-height:12px;white-space:nowrap"><span class="c">供应商未知</span></div>
<div class="a cl" style="left:1318px;top:306px;width:1px;height:21px;"></div>
<div class="a" style="left:1219px;top:311px;width:99px;text-align:center;line-height:12px;white-space:nowrap"><span class="c">生产厂家未知</span></div>
<div class="a cl" style="left:1418px;top:306px;width:1px;height:21px;"></div>
<div class="a" style="left:1316px;top:311px;width:99px;text-align:center;line-height:12px;white-space:nowrap"><span class="m">03</span></div>
<div class="a cl" style="left:1538px;top:306px;width:1px;height:21px;"></div>
<div class="a" style="left:1419px;top:311px;width:119px;text-align:center;line-height:12px;white-space:nowrap"><span class="m">HG00005</span></div>
<div class="a cl" style="left:49px;top:327px;width:1846px;height:1px;"></div>
<div class="a " style="left:0px;top:328px;width:48px;height:33px;background:#e2ebf7"></div>
<div class="a hl" style="left:0px;top:361px;width:48px;height:1px;"></div>
<div class="a hl" style="left:48px;top:328px;width:1px;height:34px;"></div>
<div class="a" style="left:4px;top:340px;line-height:12px;white-space:nowrap;"><div class="m" style="width:48px;text-align:center">11</div></div>
<div class="a " style="left:55px;top:340px;width:9px;height:9px;border:1px solid #5a6a7a;background:linear-gradient(#fff,#dde4ea);border-radius:1px"></div>
<div class="a " style="left:57px;top:344px;width:5px;height:1px;background:#2a4a4a"></div>
<div class="a" style="left:68px;top:340px;line-height:12px;white-space:nowrap;"><span class="m">[SMT01-05]&nbsp;</span><span class="c">库存数量合计</span><span class="m">:110.00</span></div>
<div class="a " style="left:69px;top:356px;width:1380px;height:1px;background:linear-gradient(90deg,#c2d6f2,rgba(194,214,242,0.55) 35%,rgba(194,214,242,0))"></div>
<div class="a cl" style="left:49px;top:361px;width:1846px;height:1px;"></div>
<div class="a " style="left:0px;top:362px;width:48px;height:21px;background:linear-gradient(90deg,#dae6f4 0%,#dae6f4 66%,#bccde6 100%);border-top:1px solid #edf3fb"></div>
<div class="a hl" style="left:0px;top:383px;width:48px;height:1px;"></div>
<div class="a hl" style="left:48px;top:362px;width:1px;height:22px;"></div>
<div class="a" style="left:5px;top:367px;line-height:12px;white-space:nowrap;"><div class="m" style="width:48px;text-align:center;color:#1a3060">12</div></div>
<div class="a cl" style="left:148px;top:362px;width:1px;height:21px;"></div>
<div class="a" style="left:69px;top:367px;width:79px;text-align:center;line-height:12px;white-space:nowrap"><span class="c">货格</span><span class="m">006</span></div>
<div class="a cl" style="left:228px;top:362px;width:1px;height:21px;"></div>
<div class="a" style="left:149px;top:367px;width:79px;text-align:center;line-height:12px;white-space:nowrap"><span class="m">110.00</span></div>
<div class="a cl" style="left:328px;top:362px;width:1px;height:21px;"></div>
<div class="a" style="left:229px;top:367px;width:99px;text-align:center;line-height:12px;white-space:nowrap"><span class="c">件</span></div>
<div class="a cl" style="left:408px;top:362px;width:1px;height:21px;"></div>
<div class="a " style="left:329px;top:362px;width:79px;height:21px;background:#ffff00"></div>
<div class="a" style="left:329px;top:367px;width:79px;text-align:center;line-height:12px;white-space:nowrap"><span class="c">货格物料过高</span></div>
<div class="a cl" style="left:508px;top:362px;width:1px;height:21px;"></div>
<div class="a" style="left:409px;top:367px;width:99px;text-align:center;line-height:12px;white-space:nowrap"><span class="m">0</span></div>
<div class="a cl" style="left:608px;top:362px;width:1px;height:21px;"></div>
<div class="a" style="left:509px;top:367px;width:99px;text-align:center;line-height:12px;white-space:nowrap"><span class="m">10</span></div>
<div class="a cl" style="left:728px;top:362px;width:1px;height:21px;"></div>
<div class="a" style="left:609px;top:367px;width:119px;text-align:center;line-height:12px;white-space:nowrap"><span class="m">1</span></div>
<div class="a cl" style="left:828px;top:362px;width:1px;height:21px;"></div>
<div class="a" style="left:729px;top:367px;width:99px;text-align:center;line-height:12px;white-space:nowrap"><span class="m">449555</span></div>
<div class="a cl" style="left:958px;top:362px;width:1px;height:21px;"></div>
<div class="a" style="left:829px;top:367px;width:129px;text-align:center;line-height:12px;white-space:nowrap"><span class="m">SMT01-05</span></div>
<div class="a cl" style="left:1118px;top:362px;width:1px;height:21px;"></div>
<div class="a" style="left:959px;top:367px;width:159px;text-align:center;line-height:12px;white-space:nowrap"><span class="m">res-mg&nbsp;22R&nbsp;J&nbsp;1206&nbsp;S</span></div>
<div class="a cl" style="left:1218px;top:362px;width:1px;height:21px;"></div>
<div class="a" style="left:1119px;top:367px;width:99px;text-align:center;line-height:12px;white-space:nowrap"><span class="c">供应商未知</span></div>
<div class="a cl" style="left:1318px;top:362px;width:1px;height:21px;"></div>
<div class="a" style="left:1219px;top:367px;width:99px;text-align:center;line-height:12px;white-space:nowrap"><span class="c">生产厂家未知</span></div>
<div class="a cl" style="left:1418px;top:362px;width:1px;height:21px;"></div>
<div class="a" style="left:1316px;top:367px;width:99px;text-align:center;line-height:12px;white-space:nowrap"><span class="m">03</span></div>
<div class="a cl" style="left:1538px;top:362px;width:1px;height:21px;"></div>
<div class="a" style="left:1419px;top:367px;width:119px;text-align:center;line-height:12px;white-space:nowrap"><span class="m">HG00006</span></div>
<div class="a cl" style="left:49px;top:383px;width:1846px;height:1px;"></div>
<div class="a " style="left:0px;top:384px;width:48px;height:33px;background:#e2ebf7"></div>
<div class="a hl" style="left:0px;top:417px;width:48px;height:1px;"></div>
<div class="a hl" style="left:48px;top:384px;width:1px;height:34px;"></div>
<div class="a" style="left:4px;top:396px;line-height:12px;white-space:nowrap;"><div class="m" style="width:48px;text-align:center">13</div></div>
<div class="a " style="left:55px;top:396px;width:9px;height:9px;border:1px solid #5a6a7a;background:linear-gradient(#fff,#dde4ea);border-radius:1px"></div>
<div class="a " style="left:57px;top:400px;width:5px;height:1px;background:#2a4a4a"></div>
<div class="a" style="left:68px;top:396px;line-height:12px;white-space:nowrap;"><span class="m">[SMT01-06]&nbsp;</span><span class="c">库存数量合计</span><span class="m">:9.00</span></div>
<div class="a " style="left:69px;top:412px;width:1380px;height:1px;background:linear-gradient(90deg,#c2d6f2,rgba(194,214,242,0.55) 35%,rgba(194,214,242,0))"></div>
<div class="a cl" style="left:49px;top:417px;width:1846px;height:1px;"></div>
<div class="a " style="left:0px;top:418px;width:48px;height:21px;background:linear-gradient(90deg,#dae6f4 0%,#dae6f4 66%,#bccde6 100%);border-top:1px solid #edf3fb"></div>
<div class="a hl" style="left:0px;top:439px;width:48px;height:1px;"></div>
<div class="a hl" style="left:48px;top:418px;width:1px;height:22px;"></div>
<div class="a" style="left:5px;top:423px;line-height:12px;white-space:nowrap;"><div class="m" style="width:48px;text-align:center;color:#1a3060">14</div></div>
<div class="a cl" style="left:148px;top:418px;width:1px;height:21px;"></div>
<div class="a" style="left:69px;top:423px;width:79px;text-align:center;line-height:12px;white-space:nowrap"><span class="c">货格</span><span class="m">007</span></div>
<div class="a cl" style="left:228px;top:418px;width:1px;height:21px;"></div>
<div class="a" style="left:149px;top:423px;width:79px;text-align:center;line-height:12px;white-space:nowrap"><span class="m">9.00</span></div>
<div class="a cl" style="left:328px;top:418px;width:1px;height:21px;"></div>
<div class="a" style="left:229px;top:423px;width:99px;text-align:center;line-height:12px;white-space:nowrap"><span class="c">件</span></div>
<div class="a cl" style="left:408px;top:418px;width:1px;height:21px;"></div>
<div class="a" style="left:329px;top:423px;width:79px;text-align:center;line-height:12px;white-space:nowrap"></div>
<div class="a cl" style="left:508px;top:418px;width:1px;height:21px;"></div>
<div class="a" style="left:409px;top:423px;width:99px;text-align:center;line-height:12px;white-space:nowrap"><span class="m">0</span></div>
<div class="a cl" style="left:608px;top:418px;width:1px;height:21px;"></div>
<div class="a" style="left:509px;top:423px;width:99px;text-align:center;line-height:12px;white-space:nowrap"><span class="m">10</span></div>
<div class="a cl" style="left:728px;top:418px;width:1px;height:21px;"></div>
<div class="a" style="left:609px;top:423px;width:119px;text-align:center;line-height:12px;white-space:nowrap"><span class="m">1</span></div>
<div class="a cl" style="left:828px;top:418px;width:1px;height:21px;"></div>
<div class="a" style="left:729px;top:423px;width:99px;text-align:center;line-height:12px;white-space:nowrap"><span class="m">449557</span></div>
<div class="a cl" style="left:958px;top:418px;width:1px;height:21px;"></div>
<div class="a" style="left:829px;top:423px;width:129px;text-align:center;line-height:12px;white-space:nowrap"><span class="m">SMT01-06</span></div>
<div class="a cl" style="left:1118px;top:418px;width:1px;height:21px;"></div>
<div class="a" style="left:959px;top:423px;width:159px;text-align:center;line-height:12px;white-space:nowrap"><span class="m">res-mg&nbsp;33R&nbsp;J&nbsp;200&nbsp;1206&nbsp;S</span></div>
<div class="a cl" style="left:1218px;top:418px;width:1px;height:21px;"></div>
<div class="a" style="left:1119px;top:423px;width:99px;text-align:center;line-height:12px;white-space:nowrap"><span class="c">供应商未知</span></div>
<div class="a cl" style="left:1318px;top:418px;width:1px;height:21px;"></div>
<div class="a" style="left:1219px;top:423px;width:99px;text-align:center;line-height:12px;white-space:nowrap"><span class="c">生产厂家未知</span></div>
<div class="a cl" style="left:1418px;top:418px;width:1px;height:21px;"></div>
<div class="a" style="left:1316px;top:423px;width:99px;text-align:center;line-height:12px;white-space:nowrap"><span class="m">03</span></div>
<div class="a cl" style="left:1538px;top:418px;width:1px;height:21px;"></div>
<div class="a" style="left:1419px;top:423px;width:119px;text-align:center;line-height:12px;white-space:nowrap"><span class="m">HG00007</span></div>
<div class="a cl" style="left:49px;top:439px;width:1846px;height:1px;"></div>
<div class="a " style="left:0px;top:440px;width:48px;height:33px;background:#e2ebf7"></div>
<div class="a hl" style="left:0px;top:473px;width:48px;height:1px;"></div>
<div class="a hl" style="left:48px;top:440px;width:1px;height:34px;"></div>
<div class="a" style="left:4px;top:452px;line-height:12px;white-space:nowrap;"><div class="m" style="width:48px;text-align:center">15</div></div>
<div class="a " style="left:55px;top:452px;width:9px;height:9px;border:1px solid #5a6a7a;background:linear-gradient(#fff,#dde4ea);border-radius:1px"></div>
<div class="a " style="left:57px;top:456px;width:5px;height:1px;background:#2a4a4a"></div>
<div class="a" style="left:68px;top:452px;line-height:12px;white-space:nowrap;"><span class="m">[SMT01-07]&nbsp;</span><span class="c">库存数量合计</span><span class="m">:9.00</span></div>
<div class="a " style="left:69px;top:468px;width:1380px;height:1px;background:linear-gradient(90deg,#c2d6f2,rgba(194,214,242,0.55) 35%,rgba(194,214,242,0))"></div>
<div class="a cl" style="left:49px;top:473px;width:1846px;height:1px;"></div>
<div class="a " style="left:0px;top:474px;width:48px;height:21px;background:linear-gradient(90deg,#dae6f4 0%,#dae6f4 66%,#bccde6 100%);border-top:1px solid #edf3fb"></div>
<div class="a hl" style="left:0px;top:495px;width:48px;height:1px;"></div>
<div class="a hl" style="left:48px;top:474px;width:1px;height:22px;"></div>
<div class="a" style="left:5px;top:479px;line-height:12px;white-space:nowrap;"><div class="m" style="width:48px;text-align:center;color:#1a3060">16</div></div>
<div class="a cl" style="left:148px;top:474px;width:1px;height:21px;"></div>
<div class="a" style="left:69px;top:479px;width:79px;text-align:center;line-height:12px;white-space:nowrap"><span class="c">货格</span><span class="m">008</span></div>
<div class="a cl" style="left:228px;top:474px;width:1px;height:21px;"></div>
<div class="a" style="left:149px;top:479px;width:79px;text-align:center;line-height:12px;white-space:nowrap"><span class="m">9.00</span></div>
<div class="a cl" style="left:328px;top:474px;width:1px;height:21px;"></div>
<div class="a" style="left:229px;top:479px;width:99px;text-align:center;line-height:12px;white-space:nowrap"><span class="c">件</span></div>
<div class="a cl" style="left:408px;top:474px;width:1px;height:21px;"></div>
<div class="a" style="left:329px;top:479px;width:79px;text-align:center;line-height:12px;white-space:nowrap"></div>
<div class="a cl" style="left:508px;top:474px;width:1px;height:21px;"></div>
<div class="a" style="left:409px;top:479px;width:99px;text-align:center;line-height:12px;white-space:nowrap"><span class="m">0</span></div>
<div class="a cl" style="left:608px;top:474px;width:1px;height:21px;"></div>
<div class="a" style="left:509px;top:479px;width:99px;text-align:center;line-height:12px;white-space:nowrap"><span class="m">10</span></div>
<div class="a cl" style="left:728px;top:474px;width:1px;height:21px;"></div>
<div class="a" style="left:609px;top:479px;width:119px;text-align:center;line-height:12px;white-space:nowrap"><span class="m">1</span></div>
<div class="a cl" style="left:828px;top:474px;width:1px;height:21px;"></div>
<div class="a" style="left:729px;top:479px;width:99px;text-align:center;line-height:12px;white-space:nowrap"><span class="m">449559</span></div>
<div class="a cl" style="left:958px;top:474px;width:1px;height:21px;"></div>
<div class="a" style="left:829px;top:479px;width:129px;text-align:center;line-height:12px;white-space:nowrap"><span class="m">SMT01-07</span></div>
<div class="a cl" style="left:1118px;top:474px;width:1px;height:21px;"></div>
<div class="a" style="left:959px;top:479px;width:159px;text-align:center;line-height:12px;white-space:nowrap"><span class="m">res-mg&nbsp;47R&nbsp;J&nbsp;1206&nbsp;S</span></div>
<div class="a cl" style="left:1218px;top:474px;width:1px;height:21px;"></div>
<div class="a" style="left:1119px;top:479px;width:99px;text-align:center;line-height:12px;white-space:nowrap"><span class="c">供应商未知</span></div>
<div class="a cl" style="left:1318px;top:474px;width:1px;height:21px;"></div>
<div class="a" style="left:1219px;top:479px;width:99px;text-align:center;line-height:12px;white-space:nowrap"><span class="c">生产厂家未知</span></div>
<div class="a cl" style="left:1418px;top:474px;width:1px;height:21px;"></div>
<div class="a" style="left:1316px;top:479px;width:99px;text-align:center;line-height:12px;white-space:nowrap"><span class="m">03</span></div>
<div class="a cl" style="left:1538px;top:474px;width:1px;height:21px;"></div>
<div class="a" style="left:1419px;top:479px;width:119px;text-align:center;line-height:12px;white-space:nowrap"><span class="m">HG00008</span></div>
<div class="a cl" style="left:49px;top:495px;width:1846px;height:1px;"></div>
<div class="a " style="left:0px;top:496px;width:48px;height:33px;background:#e2ebf7"></div>
<div class="a hl" style="left:0px;top:529px;width:48px;height:1px;"></div>
<div class="a hl" style="left:48px;top:496px;width:1px;height:34px;"></div>
<div class="a" style="left:4px;top:508px;line-height:12px;white-space:nowrap;"><div class="m" style="width:48px;text-align:center">17</div></div>
<div class="a " style="left:55px;top:508px;width:9px;height:9px;border:1px solid #5a6a7a;background:linear-gradient(#fff,#dde4ea);border-radius:1px"></div>
<div class="a " style="left:57px;top:512px;width:5px;height:1px;background:#2a4a4a"></div>
<div class="a" style="left:68px;top:508px;line-height:12px;white-space:nowrap;"><span class="m">[SMT01-08]&nbsp;</span><span class="c">库存数量合计</span><span class="m">:40.00</span></div>
<div class="a " style="left:69px;top:524px;width:1380px;height:1px;background:linear-gradient(90deg,#c2d6f2,rgba(194,214,242,0.55) 35%,rgba(194,214,242,0))"></div>
<div class="a cl" style="left:49px;top:529px;width:1846px;height:1px;"></div>
<div class="a " style="left:0px;top:530px;width:48px;height:21px;background:linear-gradient(90deg,#dae6f4 0%,#dae6f4 66%,#bccde6 100%);border-top:1px solid #edf3fb"></div>
<div class="a hl" style="left:0px;top:551px;width:48px;height:1px;"></div>
<div class="a hl" style="left:48px;top:530px;width:1px;height:22px;"></div>
<div class="a" style="left:5px;top:535px;line-height:12px;white-space:nowrap;"><div class="m" style="width:48px;text-align:center;color:#1a3060">18</div></div>
<div class="a cl" style="left:148px;top:530px;width:1px;height:21px;"></div>
<div class="a" style="left:69px;top:535px;width:79px;text-align:center;line-height:12px;white-space:nowrap"><span class="c">货格</span><span class="m">009</span></div>
<div class="a cl" style="left:228px;top:530px;width:1px;height:21px;"></div>
<div class="a" style="left:149px;top:535px;width:79px;text-align:center;line-height:12px;white-space:nowrap"><span class="m">40.00</span></div>
<div class="a cl" style="left:328px;top:530px;width:1px;height:21px;"></div>
<div class="a" style="left:229px;top:535px;width:99px;text-align:center;line-height:12px;white-space:nowrap"><span class="c">件</span></div>
<div class="a cl" style="left:408px;top:530px;width:1px;height:21px;"></div>
<div class="a " style="left:329px;top:530px;width:79px;height:21px;background:#ffff00"></div>
<div class="a" style="left:329px;top:535px;width:79px;text-align:center;line-height:12px;white-space:nowrap"><span class="c">货格物料过高</span></div>
<div class="a cl" style="left:508px;top:530px;width:1px;height:21px;"></div>
<div class="a" style="left:409px;top:535px;width:99px;text-align:center;line-height:12px;white-space:nowrap"><span class="m">0</span></div>
<div class="a cl" style="left:608px;top:530px;width:1px;height:21px;"></div>
<div class="a" style="left:509px;top:535px;width:99px;text-align:center;line-height:12px;white-space:nowrap"><span class="m">30</span></div>
<div class="a cl" style="left:728px;top:530px;width:1px;height:21px;"></div>
<div class="a" style="left:609px;top:535px;width:119px;text-align:center;line-height:12px;white-space:nowrap"><span class="m">1</span></div>
<div class="a cl" style="left:828px;top:530px;width:1px;height:21px;"></div>
<div class="a" style="left:729px;top:535px;width:99px;text-align:center;line-height:12px;white-space:nowrap"><span class="m">449561</span></div>
<div class="a cl" style="left:958px;top:530px;width:1px;height:21px;"></div>
<div class="a" style="left:829px;top:535px;width:129px;text-align:center;line-height:12px;white-space:nowrap"><span class="m">SMT01-08</span></div>
<div class="a cl" style="left:1118px;top:530px;width:1px;height:21px;"></div>
<div class="a" style="left:959px;top:535px;width:159px;text-align:center;line-height:12px;white-space:nowrap"><span class="m">res-mg&nbsp;68R&nbsp;J&nbsp;1206&nbsp;S</span></div>
<div class="a cl" style="left:1218px;top:530px;width:1px;height:21px;"></div>
<div class="a" style="left:1119px;top:535px;width:99px;text-align:center;line-height:12px;white-space:nowrap"><span class="c">供应商未知</span></div>
<div class="a cl" style="left:1318px;top:530px;width:1px;height:21px;"></div>
<div class="a" style="left:1219px;top:535px;width:99px;text-align:center;line-height:12px;white-space:nowrap"><span class="c">生产厂家未知</span></div>
<div class="a cl" style="left:1418px;top:530px;width:1px;height:21px;"></div>
<div class="a" style="left:1316px;top:535px;width:99px;text-align:center;line-height:12px;white-space:nowrap"><span class="m">03</span></div>
<div class="a cl" style="left:1538px;top:530px;width:1px;height:21px;"></div>
<div class="a" style="left:1419px;top:535px;width:119px;text-align:center;line-height:12px;white-space:nowrap"><span class="m">HG00009</span></div>
<div class="a cl" style="left:49px;top:551px;width:1846px;height:1px;"></div>
<div class="a " style="left:0px;top:552px;width:48px;height:33px;background:#e2ebf7"></div>
<div class="a hl" style="left:0px;top:585px;width:48px;height:1px;"></div>
<div class="a hl" style="left:48px;top:552px;width:1px;height:34px;"></div>
<div class="a" style="left:4px;top:564px;line-height:12px;white-space:nowrap;"><div class="m" style="width:48px;text-align:center">19</div></div>
<div class="a " style="left:55px;top:564px;width:9px;height:9px;border:1px solid #5a6a7a;background:linear-gradient(#fff,#dde4ea);border-radius:1px"></div>
<div class="a " style="left:57px;top:568px;width:5px;height:1px;background:#2a4a4a"></div>
<div class="a" style="left:68px;top:564px;line-height:12px;white-space:nowrap;"><span class="m">[SMT01-09]&nbsp;</span><span class="c">库存数量合计</span><span class="m">:40.00</span></div>
<div class="a " style="left:69px;top:580px;width:1380px;height:1px;background:linear-gradient(90deg,#c2d6f2,rgba(194,214,242,0.55) 35%,rgba(194,214,242,0))"></div>
<div class="a cl" style="left:49px;top:585px;width:1846px;height:1px;"></div>
<div class="a " style="left:0px;top:586px;width:48px;height:21px;background:linear-gradient(90deg,#dae6f4 0%,#dae6f4 66%,#bccde6 100%);border-top:1px solid #edf3fb"></div>
<div class="a hl" style="left:0px;top:607px;width:48px;height:1px;"></div>
<div class="a hl" style="left:48px;top:586px;width:1px;height:22px;"></div>
<div class="a" style="left:5px;top:591px;line-height:12px;white-space:nowrap;"><div class="m" style="width:48px;text-align:center;color:#1a3060">20</div></div>
<div class="a cl" style="left:148px;top:586px;width:1px;height:21px;"></div>
<div class="a" style="left:69px;top:591px;width:79px;text-align:center;line-height:12px;white-space:nowrap"><span class="c">货格</span><span class="m">010</span></div>
<div class="a cl" style="left:228px;top:586px;width:1px;height:21px;"></div>
<div class="a" style="left:149px;top:591px;width:79px;text-align:center;line-height:12px;white-space:nowrap"><span class="m">40.00</span></div>
<div class="a cl" style="left:328px;top:586px;width:1px;height:21px;"></div>
<div class="a" style="left:229px;top:591px;width:99px;text-align:center;line-height:12px;white-space:nowrap"><span class="c">件</span></div>
<div class="a cl" style="left:408px;top:586px;width:1px;height:21px;"></div>
<div class="a " style="left:329px;top:586px;width:79px;height:21px;background:#ffff00"></div>
<div class="a" style="left:329px;top:591px;width:79px;text-align:center;line-height:12px;white-space:nowrap"><span class="c">货格物料过高</span></div>
<div class="a cl" style="left:508px;top:586px;width:1px;height:21px;"></div>
<div class="a" style="left:409px;top:591px;width:99px;text-align:center;line-height:12px;white-space:nowrap"><span class="m">0</span></div>
<div class="a cl" style="left:608px;top:586px;width:1px;height:21px;"></div>
<div class="a" style="left:509px;top:591px;width:99px;text-align:center;line-height:12px;white-space:nowrap"><span class="m">10</span></div>
<div class="a cl" style="left:728px;top:586px;width:1px;height:21px;"></div>
<div class="a" style="left:609px;top:591px;width:119px;text-align:center;line-height:12px;white-space:nowrap"><span class="m">1</span></div>
<div class="a cl" style="left:828px;top:586px;width:1px;height:21px;"></div>
<div class="a" style="left:729px;top:591px;width:99px;text-align:center;line-height:12px;white-space:nowrap"><span class="m">449562</span></div>
<div class="a cl" style="left:958px;top:586px;width:1px;height:21px;"></div>
<div class="a" style="left:829px;top:591px;width:129px;text-align:center;line-height:12px;white-space:nowrap"><span class="m">SMT01-09</span></div>
<div class="a cl" style="left:1118px;top:586px;width:1px;height:21px;"></div>
<div class="a" style="left:959px;top:591px;width:159px;text-align:center;line-height:12px;white-space:nowrap"><span class="m">res-mg&nbsp;82R&nbsp;J&nbsp;1206&nbsp;S</span></div>
<div class="a cl" style="left:1218px;top:586px;width:1px;height:21px;"></div>
<div class="a" style="left:1119px;top:591px;width:99px;text-align:center;line-height:12px;white-space:nowrap"><span class="c">供应商未知</span></div>
<div class="a cl" style="left:1318px;top:586px;width:1px;height:21px;"></div>
<div class="a" style="left:1219px;top:591px;width:99px;text-align:center;line-height:12px;white-space:nowrap"><span class="c">生产厂家未知</span></div>
<div class="a cl" style="left:1418px;top:586px;width:1px;height:21px;"></div>
<div class="a" style="left:1316px;top:591px;width:99px;text-align:center;line-height:12px;white-space:nowrap"><span class="m">03</span></div>
<div class="a cl" style="left:1538px;top:586px;width:1px;height:21px;"></div>
<div class="a" style="left:1419px;top:591px;width:119px;text-align:center;line-height:12px;white-space:nowrap"><span class="m">HG00010</span></div>
<div class="a cl" style="left:49px;top:607px;width:1846px;height:1px;"></div>
<div class="a " style="left:0px;top:608px;width:48px;height:33px;background:#e2ebf7"></div>
<div class="a hl" style="left:0px;top:641px;width:48px;height:1px;"></div>
<div class="a hl" style="left:48px;top:608px;width:1px;height:34px;"></div>
<div class="a" style="left:4px;top:620px;line-height:12px;white-space:nowrap;"><div class="m" style="width:48px;text-align:center">21</div></div>
<div class="a " style="left:55px;top:620px;width:9px;height:9px;border:1px solid #5a6a7a;background:linear-gradient(#fff,#dde4ea);border-radius:1px"></div>
<div class="a " style="left:57px;top:624px;width:5px;height:1px;background:#2a4a4a"></div>
<div class="a" style="left:68px;top:620px;line-height:12px;white-space:nowrap;"><span class="m">[SMT01-10]&nbsp;</span><span class="c">库存数量合计</span><span class="m">:40.00</span></div>
<div class="a " style="left:69px;top:636px;width:1380px;height:1px;background:linear-gradient(90deg,#c2d6f2,rgba(194,214,242,0.55) 35%,rgba(194,214,242,0))"></div>
<div class="a cl" style="left:49px;top:641px;width:1846px;height:1px;"></div>
<div class="a " style="left:0px;top:642px;width:48px;height:21px;background:linear-gradient(90deg,#dae6f4 0%,#dae6f4 66%,#bccde6 100%);border-top:1px solid #edf3fb"></div>
<div class="a hl" style="left:0px;top:663px;width:48px;height:1px;"></div>
<div class="a hl" style="left:48px;top:642px;width:1px;height:22px;"></div>
<div class="a" style="left:5px;top:647px;line-height:12px;white-space:nowrap;"><div class="m" style="width:48px;text-align:center;color:#1a3060">22</div></div>
<div class="a cl" style="left:148px;top:642px;width:1px;height:21px;"></div>
<div class="a" style="left:69px;top:647px;width:79px;text-align:center;line-height:12px;white-space:nowrap"><span class="c">货格</span><span class="m">011</span></div>
<div class="a cl" style="left:228px;top:642px;width:1px;height:21px;"></div>
<div class="a" style="left:149px;top:647px;width:79px;text-align:center;line-height:12px;white-space:nowrap"><span class="m">40.00</span></div>
<div class="a cl" style="left:328px;top:642px;width:1px;height:21px;"></div>
<div class="a" style="left:229px;top:647px;width:99px;text-align:center;line-height:12px;white-space:nowrap"><span class="c">件</span></div>
<div class="a cl" style="left:408px;top:642px;width:1px;height:21px;"></div>
<div class="a " style="left:329px;top:642px;width:79px;height:21px;background:#ffff00"></div>
<div class="a" style="left:329px;top:647px;width:79px;text-align:center;line-height:12px;white-space:nowrap"><span class="c">货格物料过高</span></div>
<div class="a cl" style="left:508px;top:642px;width:1px;height:21px;"></div>
<div class="a" style="left:409px;top:647px;width:99px;text-align:center;line-height:12px;white-space:nowrap"><span class="m">0</span></div>
<div class="a cl" style="left:608px;top:642px;width:1px;height:21px;"></div>
<div class="a" style="left:509px;top:647px;width:99px;text-align:center;line-height:12px;white-space:nowrap"><span class="m">20</span></div>
<div class="a cl" style="left:728px;top:642px;width:1px;height:21px;"></div>
<div class="a" style="left:609px;top:647px;width:119px;text-align:center;line-height:12px;white-space:nowrap"><span class="m">1</span></div>
<div class="a cl" style="left:828px;top:642px;width:1px;height:21px;"></div>
<div class="a" style="left:729px;top:647px;width:99px;text-align:center;line-height:12px;white-space:nowrap"><span class="m">449563</span></div>
<div class="a cl" style="left:958px;top:642px;width:1px;height:21px;"></div>
<div class="a" style="left:829px;top:647px;width:129px;text-align:center;line-height:12px;white-space:nowrap"><span class="m">SMT01-10</span></div>
<div class="a cl" style="left:1118px;top:642px;width:1px;height:21px;"></div>
<div class="a" style="left:959px;top:647px;width:159px;text-align:center;line-height:12px;white-space:nowrap"><span class="m">res-mg&nbsp;100R&nbsp;J&nbsp;1206&nbsp;S</span></div>
<div class="a cl" style="left:1218px;top:642px;width:1px;height:21px;"></div>
<div class="a" style="left:1119px;top:647px;width:99px;text-align:center;line-height:12px;white-space:nowrap"><span class="c">供应商未知</span></div>
<div class="a cl" style="left:1318px;top:642px;width:1px;height:21px;"></div>
<div class="a" style="left:1219px;top:647px;width:99px;text-align:center;line-height:12px;white-space:nowrap"><span class="c">生产厂家未知</span></div>
<div class="a cl" style="left:1418px;top:642px;width:1px;height:21px;"></div>
<div class="a" style="left:1316px;top:647px;width:99px;text-align:center;line-height:12px;white-space:nowrap"><span class="m">03</span></div>
<div class="a cl" style="left:1538px;top:642px;width:1px;height:21px;"></div>
<div class="a" style="left:1419px;top:647px;width:119px;text-align:center;line-height:12px;white-space:nowrap"><span class="m">HG00011</span></div>
<div class="a cl" style="left:49px;top:663px;width:1846px;height:1px;"></div>
<div class="a " style="left:0px;top:664px;width:48px;height:33px;background:#e2ebf7"></div>
<div class="a hl" style="left:0px;top:697px;width:48px;height:1px;"></div>
<div class="a hl" style="left:48px;top:664px;width:1px;height:34px;"></div>
<div class="a" style="left:4px;top:676px;line-height:12px;white-space:nowrap;"><div class="m" style="width:48px;text-align:center">23</div></div>
<div class="a " style="left:55px;top:676px;width:9px;height:9px;border:1px solid #5a6a7a;background:linear-gradient(#fff,#dde4ea);border-radius:1px"></div>
<div class="a " style="left:57px;top:680px;width:5px;height:1px;background:#2a4a4a"></div>
<div class="a" style="left:68px;top:676px;line-height:12px;white-space:nowrap;"><span class="m">[SMT01-100]&nbsp;</span><span class="c">库存数量合计</span><span class="m">:0</span></div>
<div class="a " style="left:69px;top:692px;width:1380px;height:1px;background:linear-gradient(90deg,#c2d6f2,rgba(194,214,242,0.55) 35%,rgba(194,214,242,0))"></div>
<div class="a cl" style="left:49px;top:697px;width:1846px;height:1px;"></div>
<div class="a " style="left:0px;top:698px;width:48px;height:21px;background:linear-gradient(90deg,#dae6f4 0%,#dae6f4 66%,#bccde6 100%);border-top:1px solid #edf3fb"></div>
<div class="a hl" style="left:0px;top:719px;width:48px;height:1px;"></div>
<div class="a hl" style="left:48px;top:698px;width:1px;height:22px;"></div>
<div class="a" style="left:5px;top:703px;line-height:12px;white-space:nowrap;"><div class="m" style="width:48px;text-align:center;color:#1a3060">24</div></div>
<div class="a cl" style="left:148px;top:698px;width:1px;height:21px;"></div>
<div class="a" style="left:69px;top:703px;width:79px;text-align:center;line-height:12px;white-space:nowrap"><span class="c">货格</span><span class="m">101</span></div>
<div class="a cl" style="left:228px;top:698px;width:1px;height:21px;"></div>
<div class="a" style="left:149px;top:703px;width:79px;text-align:center;line-height:12px;white-space:nowrap"><span class="m">0</span></div>
<div class="a cl" style="left:328px;top:698px;width:1px;height:21px;"></div>
<div class="a" style="left:229px;top:703px;width:99px;text-align:center;line-height:12px;white-space:nowrap"><span class="c">件</span></div>
<div class="a cl" style="left:408px;top:698px;width:1px;height:21px;"></div>
<div class="a" style="left:329px;top:703px;width:79px;text-align:center;line-height:12px;white-space:nowrap"></div>
<div class="a cl" style="left:508px;top:698px;width:1px;height:21px;"></div>
<div class="a" style="left:409px;top:703px;width:99px;text-align:center;line-height:12px;white-space:nowrap"><span class="m">0</span></div>
<div class="a cl" style="left:608px;top:698px;width:1px;height:21px;"></div>
<div class="a" style="left:509px;top:703px;width:99px;text-align:center;line-height:12px;white-space:nowrap"><span class="m">10</span></div>
<div class="a cl" style="left:728px;top:698px;width:1px;height:21px;"></div>
<div class="a" style="left:609px;top:703px;width:119px;text-align:center;line-height:12px;white-space:nowrap"><span class="m">1</span></div>
<div class="a cl" style="left:828px;top:698px;width:1px;height:21px;"></div>
<div class="a" style="left:729px;top:703px;width:99px;text-align:center;line-height:12px;white-space:nowrap"><span class="m">450674</span></div>
<div class="a cl" style="left:958px;top:698px;width:1px;height:21px;"></div>
<div class="a" style="left:829px;top:703px;width:129px;text-align:center;line-height:12px;white-space:nowrap"><span class="m">SMT01-100</span></div>
<div class="a cl" style="left:1118px;top:698px;width:1px;height:21px;"></div>
<div class="a" style="left:959px;top:703px;width:159px;text-align:center;line-height:12px;white-space:nowrap"><span class="m">res-mg&nbsp;18k&nbsp;J&nbsp;0805&nbsp;S</span></div>
<div class="a cl" style="left:1218px;top:698px;width:1px;height:21px;"></div>
<div class="a" style="left:1119px;top:703px;width:99px;text-align:center;line-height:12px;white-space:nowrap"><span class="c">供应商未知</span></div>
<div class="a cl" style="left:1318px;top:698px;width:1px;height:21px;"></div>
<div class="a" style="left:1219px;top:703px;width:99px;text-align:center;line-height:12px;white-space:nowrap"><span class="c">生产厂家未知</span></div>
<div class="a cl" style="left:1418px;top:698px;width:1px;height:21px;"></div>
<div class="a" style="left:1316px;top:703px;width:99px;text-align:center;line-height:12px;white-space:nowrap"><span class="m">02</span></div>
<div class="a cl" style="left:1538px;top:698px;width:1px;height:21px;"></div>
<div class="a" style="left:1419px;top:703px;width:119px;text-align:center;line-height:12px;white-space:nowrap"><span class="m">HG00101</span></div>
<div class="a cl" style="left:49px;top:719px;width:1846px;height:1px;"></div>
<div class="a " style="left:0px;top:720px;width:48px;height:33px;background:#e2ebf7"></div>
<div class="a hl" style="left:0px;top:753px;width:48px;height:1px;"></div>
<div class="a hl" style="left:48px;top:720px;width:1px;height:34px;"></div>
<div class="a" style="left:4px;top:732px;line-height:12px;white-space:nowrap;"><div class="m" style="width:48px;text-align:center">25</div></div>
<div class="a " style="left:55px;top:732px;width:9px;height:9px;border:1px solid #5a6a7a;background:linear-gradient(#fff,#dde4ea);border-radius:1px"></div>
<div class="a " style="left:57px;top:736px;width:5px;height:1px;background:#2a4a4a"></div>
<div class="a" style="left:68px;top:732px;line-height:12px;white-space:nowrap;"><span class="m">[SMT01-101]&nbsp;</span><span class="c">库存数量合计</span><span class="m">:0</span></div>
<div class="a " style="left:69px;top:748px;width:1380px;height:1px;background:linear-gradient(90deg,#c2d6f2,rgba(194,214,242,0.55) 35%,rgba(194,214,242,0))"></div>
<div class="a cl" style="left:49px;top:753px;width:1846px;height:1px;"></div>
<div class="a cl" style="left:148px;top:754px;width:1px;height:3px;"></div>
<div class="a cl" style="left:228px;top:754px;width:1px;height:3px;"></div>
<div class="a cl" style="left:328px;top:754px;width:1px;height:3px;"></div>
<div class="a cl" style="left:408px;top:754px;width:1px;height:3px;"></div>
<div class="a cl" style="left:508px;top:754px;width:1px;height:3px;"></div>
<div class="a cl" style="left:608px;top:754px;width:1px;height:3px;"></div>
<div class="a cl" style="left:728px;top:754px;width:1px;height:3px;"></div>
<div class="a cl" style="left:828px;top:754px;width:1px;height:3px;"></div>
<div class="a cl" style="left:958px;top:754px;width:1px;height:3px;"></div>
<div class="a cl" style="left:1118px;top:754px;width:1px;height:3px;"></div>
<div class="a cl" style="left:1218px;top:754px;width:1px;height:3px;"></div>
<div class="a cl" style="left:1318px;top:754px;width:1px;height:3px;"></div>
<div class="a cl" style="left:1418px;top:754px;width:1px;height:3px;"></div>
<div class="a cl" style="left:1538px;top:754px;width:1px;height:3px;"></div>
<div class="a " style="left:0px;top:754px;width:48px;height:3px;background:#dbe6f4"></div>
<div class="a hl" style="left:48px;top:754px;width:1px;height:3px;"></div>
<div class="a " style="left:1895px;top:0px;width:17px;height:757px;background:linear-gradient(90deg,#fbfbfb,#eeeeee)"></div>
<div class="a" style="left:1899px;top:6px;width:0;height:0;border-left:5px solid transparent;border-right:5px solid transparent;border-bottom:5px solid #4a5a80"></div>
<div class="a " style="left:1896px;top:18px;width:15px;height:14px;border:1px solid #5a6a9a;border-radius:2px;background:#eef2f8"></div>
<div class="a " style="left:1899px;top:21px;width:9px;height:1px;background:#777"></div>
<div class="a " style="left:1899px;top:23px;width:9px;height:1px;background:#777"></div>
<div class="a " style="left:1899px;top:25px;width:9px;height:1px;background:#777"></div>
<div class="a " style="left:1899px;top:27px;width:9px;height:1px;background:#777"></div>
<div class="a" style="left:1899px;top:745px;width:0;height:0;border-left:5px solid transparent;border-right:5px solid transparent;border-top:5px solid #4a5a80"></div>
</div>
<div class="a" style="left:407px;top:985px;color:#f00;font-weight:bold;line-height:15px;font-size:14.5px;white-space:nowrap">计数<span style="font-family:Liberation Mono;font-size:12px;letter-spacing:0.1px">={0}</span></div>
<div class="a" style="left:485px;top:985px;color:#f00;font-weight:bold;line-height:15px;font-size:14.5px;white-space:nowrap">求和<span style="font-family:Liberation Mono;font-size:12px;letter-spacing:0.1px">={1}</span></div>
<div class="a" style="left:0;top:1018px;width:1920px;height:24px;background:#f0f0f0"></div>
<div class="a" style="left:0;top:1040px;width:1920px;height:1px;background:#303030"></div>
<div class="a" style="left:0;top:1041px;width:1920px;height:1px;background:#e8ecf2"></div>
<div class="a" style="left:4px;top:1023px;line-height:12px">正在使用的灯:</div>
<div class="a" style="left:87px;top:1020px;width:17px;height:17px;border-radius:9px;background:radial-gradient(circle at 50% 90%,#c0c0c0 0%,#707070 40%,#4a4a4a 75%,#3a3a3a 100%);border:1px solid #1a1a1a"></div>
<div class="a" style="left:110px;top:1020px;width:17px;height:17px;border-radius:9px;background:radial-gradient(circle at 50% 90%,#c0c0c0 0%,#707070 40%,#4a4a4a 75%,#3a3a3a 100%);border:1px solid #1a1a1a"></div>
<div class="a" style="left:133px;top:1020px;width:17px;height:17px;border-radius:9px;background:radial-gradient(circle at 50% 90%,#c0c0c0 0%,#707070 40%,#4a4a4a 75%,#3a3a3a 100%);border:1px solid #1a1a1a"></div>
<div class="a" style="left:156px;top:1020px;width:17px;height:17px;border-radius:9px;background:radial-gradient(circle at 50% 90%,#c0c0c0 0%,#707070 40%,#4a4a4a 75%,#3a3a3a 100%);border:1px solid #1a1a1a"></div>
<div class="a" style="left:179px;top:1020px;width:17px;height:17px;border-radius:9px;background:radial-gradient(circle at 50% 90%,#c0c0c0 0%,#707070 40%,#4a4a4a 75%,#3a3a3a 100%);border:1px solid #1a1a1a"></div>
<div class="a" style="left:232px;top:1023px;line-height:12px">通讯信息:</div>
<div class="a" style="left:1693px;top:1023px;line-height:12px;font-weight:bold">当前登陆用户：</div>
<div class="a" style="left:1785px;top:1023px;line-height:12px;font-weight:bold">管理员</div>
<div class="a" style="left:1828px;top:1023px;line-height:12px;font-weight:bold">（</div>
<div class="a" style="left:1840px;top:1023px;line-height:12px;font-weight:bold">超级用户</div>
<div class="a" style="left:1888px;top:1023px;line-height:12px;font-weight:bold">）</div>
</body></html>
